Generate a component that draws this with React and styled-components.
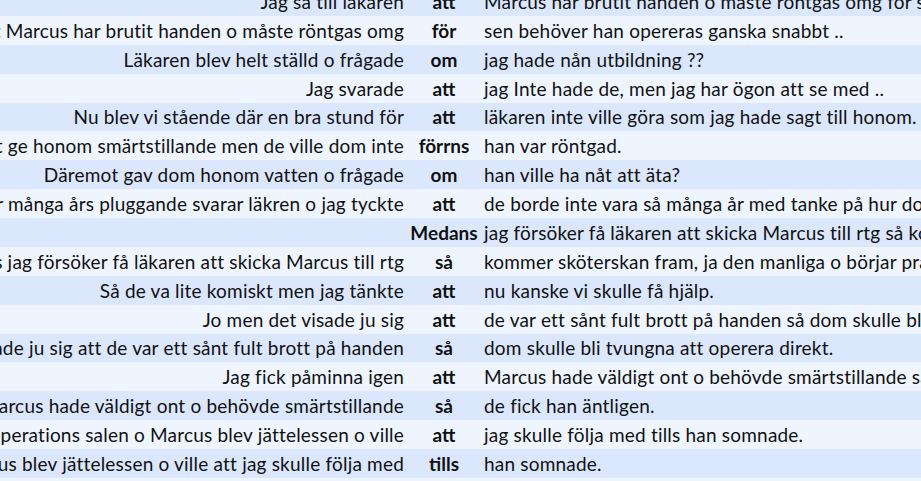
import React from "react";
import styled, { createGlobalStyle } from "styled-components";

const GlobalStyle = createGlobalStyle`
    html, body {
        margin: 0;
        padding: 0;
        overflow: hidden;
        background: #eff5fe;
    }
`;

// Concordance lines: left context, keyword, right context
const lines = [
    ["Jag så till läkaren", "att", "Marcus har brutit handen o måste röntgas omg för sen behöver han opereras ganska snabbt .."],
    ["Jag så till läkaren att Marcus har brutit handen o måste röntgas omg", "för", "sen behöver han opereras ganska snabbt .."],
    ["Läkaren blev helt ställd o frågade", "om", "jag hade nån utbildning ??"],
    ["Jag svarade", "att", "jag Inte hade de, men jag har ögon att se med .."],
    ["Nu blev vi stående där en bra stund för", "att", "läkaren inte ville göra som jag hade sagt till honom."],
    ["Jag bad dom att ge honom smärtstillande men de ville dom inte", "förrns", "han var röntgad."],
    ["Däremot gav dom honom vatten o frågade", "om", "han ville ha nåt att äta?"],
    ["Efter många års pluggande svarar läkren o jag tyckte", "att", "de borde inte vara så många år med tanke på hur dom betedde sig."],
    ["", "Medans", "jag försöker få läkaren att skicka Marcus till rtg så kommer sköterskan fram"],
    ["Medans jag försöker få läkaren att skicka Marcus till rtg", "så", "kommer sköterskan fram, ja den manliga o börjar prata"],
    ["Så de va lite komiskt men jag tänkte", "att", "nu kanske vi skulle få hjälp."],
    ["Jo men det visade ju sig", "att", "de var ett sånt fult brott på handen så dom skulle bli tvungna att operera direkt."],
    ["Jo men det visade ju sig att de var ett sånt fult brott på handen", "så", "dom skulle bli tvungna att operera direkt."],
    ["Jag fick påminna igen", "att", "Marcus hade väldigt ont o behövde smärtstillande så de fick han äntligen."],
    ["Jag fick påminna igen att Marcus hade väldigt ont o behövde smärtstillande", "så", "de fick han äntligen."],
    ["Sen kom vi till operations salen o Marcus blev jättelessen o ville", "att", "jag skulle följa med tills han somnade."],
    ["Sen kom vi till operations salen o Marcus blev jättelessen o ville att jag skulle följa med", "tills", "han somnade."],
    ["", "", ""],
];

const Table = styled.div`
    margin-top: -13px;
    font-family: "Lato", "Open Sans", sans-serif;
    font-size: 19px;
    letter-spacing: 0.2px;
    color: #111;
`;

const Row = styled.div`
    display: grid;
    grid-template-columns: 408px 72px 1fr;
    height: 28.875px;
    align-items: center;
    background: ${props => props.odd ? "#eff5fe" : "#dbe7fc"};
`;

const Left = styled.div`
    display: flex;
    justify-content: flex-end;
    overflow: hidden;
    white-space: nowrap;
    padding-right: 4px;
`;

const Keyword = styled.div`
    text-align: center;
    font-weight: 700;
    letter-spacing: 0;
    white-space: nowrap;
`;

const Right = styled.div`
    white-space: nowrap;
    overflow: hidden;
    padding-left: 4px;
`;

export default function App() {
    return (
        <>
            <GlobalStyle />
            <Table>
                {lines.map((line, i) => (
                    <Row key={i} odd={i % 2 === 1}>
                        <Left><span>{line[0]}</span></Left>
                        <Keyword>{line[1]}</Keyword>
                        <Right>{line[2]}</Right>
                    </Row>
                ))}
            </Table>
        </>
    );
}
